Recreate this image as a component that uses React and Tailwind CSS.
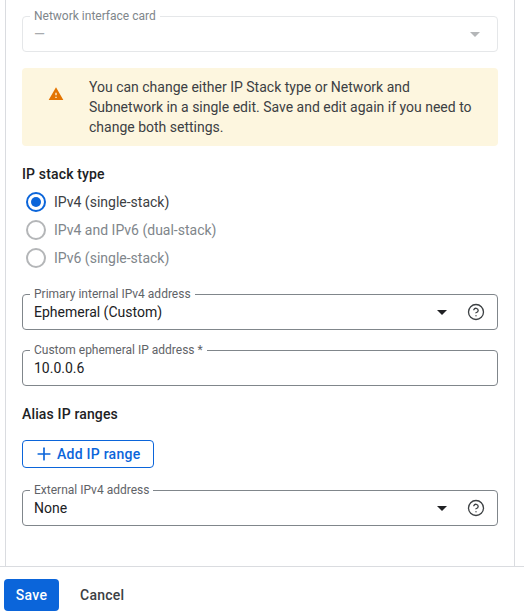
import { Plus, CircleHelp } from 'lucide-react';

const Arrow = ({ color = 'border-t-[#202124]' }) => (
  <span className={`h-0 w-0 border-x-[5px] border-t-[5px] border-x-transparent ${color}`} />
);

function Field({ label, value, disabled, select, help, className = '' }) {
  return (
    <div className={`relative flex h-[36px] items-center rounded border pl-[11px] pr-[12px] ${disabled ? 'border-[#e5e7e9]' : 'border-[#80868b]'} ${className}`}>
      <span className={`absolute -top-[9px] left-[7px] bg-white px-1 text-xs leading-[16px] ${disabled ? 'text-[#80868b]' : 'text-[#5f6368]'}`}>{label}</span>
      <span className={`flex-1 text-sm ${disabled ? 'text-[#a8abae]' : 'text-[#202124]'}`}>{value}</span>
      {select && <span className={`flex ${help ? 'mr-[20px]' : 'mr-[5px]'}`}><Arrow color={disabled ? 'border-t-[#b4b6b8]' : 'border-t-[#202124]'} /></span>}
      {help && <CircleHelp size={18} strokeWidth={1.75} className="text-[#3c4043]" />}
    </div>
  );
}

function Radio({ label, checked }) {
  return (
    <div className="flex h-[28px] items-center pl-[4px]">
      <span className={`flex h-[20px] w-[20px] items-center justify-center rounded-full border-2 ${checked ? 'border-[#0b65da]' : 'border-[#b4b6b8]'}`}>
        {checked && <span className="h-[10px] w-[10px] rounded-full bg-[#0b65da]" />}
      </span>
      <span className={`ml-[8px] text-sm ${checked ? 'text-[#3c4043]' : 'text-[#80868b]'}`}>{label}</span>
    </div>
  );
}

export default function App() {
  return (
    <div className="flex h-[616px] w-[524px] flex-col overflow-hidden bg-white font-['Roboto',sans-serif]">
      <div className="ml-[5px] mr-[9px] h-[566px] border-x border-[#dadce0] px-4 pt-4">
        <Field label="Network interface card" value="—" disabled select />

        <div className="mt-4 flex h-[78px] rounded bg-[#fdf6df] pt-[9px] pl-[26px] pr-4">
          <svg viewBox="0 0 24 24" width="16" height="16" className="mt-[9px] shrink-0 fill-[#e37400]">
            <path d="M1 21h22L12 2 1 21zm12-3h-2v-2h2v2zm0-4h-2v-4h2v4z" />
          </svg>
          <p className="ml-[25px] text-sm leading-[20px] text-[#3c4043]">
            You can change either IP Stack type or Network and Subnetwork in a single edit. Save and edit again if you need to change both settings.
          </p>
        </div>

        <h3 className="mt-[18px] text-sm font-medium leading-[20px] tracking-[0.15px] text-[#202124]">IP stack type</h3>
        <div className="mt-[4px]">
          <Radio label="IPv4 (single-stack)" checked />
          <Radio label="IPv4 and IPv6 (dual-stack)" />
          <Radio label="IPv6 (single-stack)" />
        </div>

        <Field className="mt-[22px]" label="Primary internal IPv4 address" value="Ephemeral (Custom)" select help />
        <Field className="mt-[20px]" label="Custom ephemeral IP address *" value="10.0.0.6" />

        <h3 className="mt-[18px] text-sm font-medium leading-[20px] tracking-[0.15px] text-[#202124]">Alias IP ranges</h3>

        <button className="mt-[16px] flex h-[28px] w-[132px] items-center rounded border border-[#0b65da] pl-[11px] text-sm font-medium tracking-[0.25px] text-[#0b65da]">
          <Plus size={20} strokeWidth={2} />
          <span className="ml-[3px]">Add IP range</span>
        </button>

        <Field className="mt-[22px]" label="External IPv4 address" value="None" select help />
      </div>

      <div className="flex flex-1 items-start border-t border-[#dadce0] pl-1 pt-3">
        <button className="h-[32px] w-[55px] rounded bg-[#0b65da] text-sm font-medium tracking-[0.25px] text-white">Save</button>
        <button className="ml-[21px] h-[32px] text-sm font-medium tracking-[0.25px] text-[#3c4043]">Cancel</button>
      </div>
    </div>
  );
}
